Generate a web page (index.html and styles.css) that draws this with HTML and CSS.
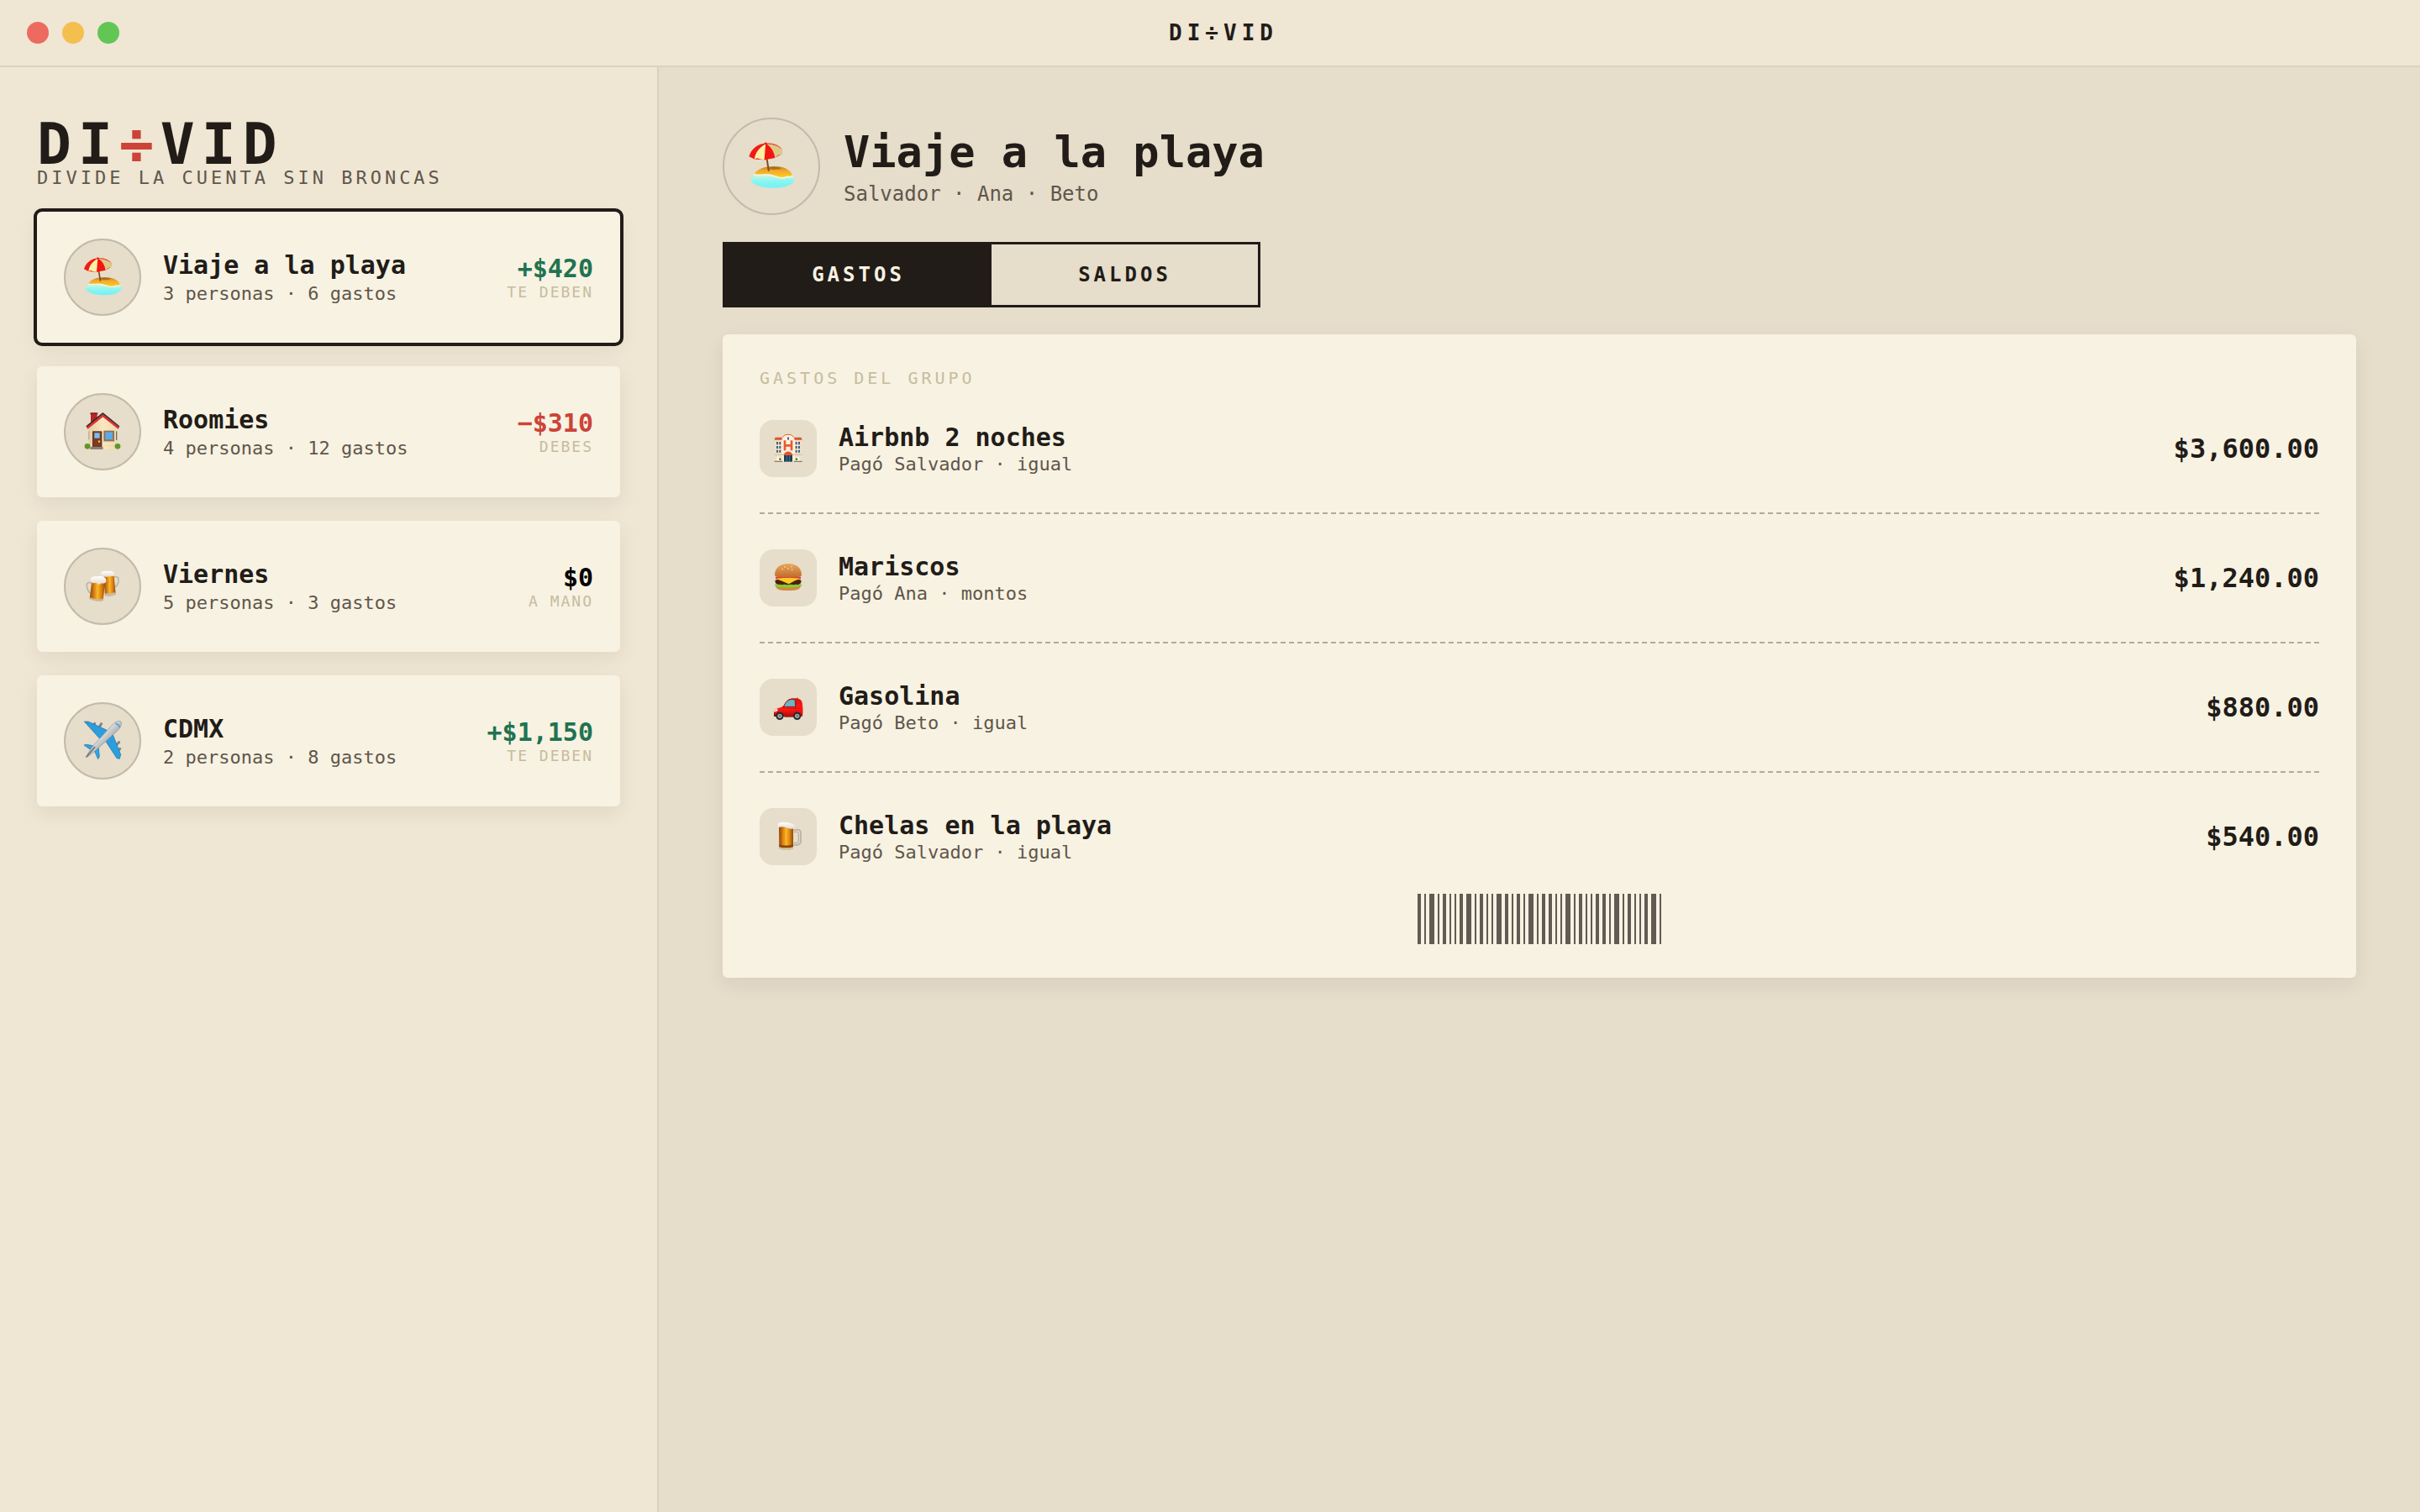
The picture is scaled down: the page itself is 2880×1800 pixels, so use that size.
FILE: index.html
```html
<!DOCTYPE html>
<html lang="es">
<head>
    <meta charset="UTF-8">
    <meta name="viewport" content="width=device-width, initial-scale=1.0">
    <title>DI÷VID</title>
    <link rel="stylesheet" href="styles.css">
</head>
<body>

    <!-- Icon drawings, reused below -->
    <svg class="sprite" aria-hidden="true">
        <defs>
            <linearGradient id="sand" x1="0" y1="0" x2="0" y2="1">
                <stop offset="0" stop-color="#b98222"/>
                <stop offset="0.35" stop-color="#f2a62e"/>
                <stop offset="1" stop-color="#ffcf1f"/>
            </linearGradient>
            <linearGradient id="sea" x1="0" y1="0" x2="0" y2="1">
                <stop offset="0" stop-color="#d9f5dc"/>
                <stop offset="0.5" stop-color="#8ff5ee"/>
                <stop offset="1" stop-color="#6cf3f8"/>
            </linearGradient>
            <linearGradient id="beer" x1="0" y1="0" x2="1" y2="0">
                <stop offset="0" stop-color="#8f4706"/>
                <stop offset="0.25" stop-color="#cf7610"/>
                <stop offset="0.5" stop-color="#fbb828"/>
                <stop offset="0.75" stop-color="#d98212"/>
                <stop offset="1" stop-color="#94490a"/>
            </linearGradient>
            <linearGradient id="foam" x1="0" y1="0" x2="0" y2="1">
                <stop offset="0" stop-color="#ffffff"/>
                <stop offset="1" stop-color="#e6d9cc"/>
            </linearGradient>
            <linearGradient id="bun" x1="0" y1="0" x2="0" y2="1">
                <stop offset="0" stop-color="#e9a75c"/>
                <stop offset="1" stop-color="#bf6d2c"/>
            </linearGradient>
            <linearGradient id="hull" x1="0" y1="0" x2="1" y2="1">
                <stop offset="0.3" stop-color="#ffffff"/>
                <stop offset="0.7" stop-color="#8d9095"/>
            </linearGradient>
            <linearGradient id="wall" x1="0" y1="0" x2="1" y2="0">
                <stop offset="0" stop-color="#e6cfa4"/>
                <stop offset="0.5" stop-color="#fbe6bf"/>
                <stop offset="1" stop-color="#f0dab0"/>
            </linearGradient>
            <linearGradient id="paint" x1="0" y1="0" x2="0" y2="1">
                <stop offset="0" stop-color="#e01010"/>
                <stop offset="0.6" stop-color="#ff1a14"/>
                <stop offset="1" stop-color="#b80808"/>
            </linearGradient>
        </defs>

        <symbol id="beach" viewBox="0 0 144 144">
            <path d="M12 112c0-14 26-20 64-18s64 4 64 18-26 24-62 24-66-10-66-24z" fill="url(#sea)"/>
            <path d="M22 96c4-14 28-24 58-24s52 12 54 28c-4 6-14 0-22 4-12 5-24-2-36-6s-34 2-54-2z" fill="url(#sand)"/>
            <path d="M22 97c18 3 36-3 52 2s26 11 38 6c8-4 16 1 23-4" fill="none" stroke="#e9f7dc" stroke-width="5" stroke-linecap="round"/>
            <ellipse cx="80" cy="78" rx="20" ry="4" fill="#8a5c14" opacity="0.6"/>
            <path d="M58 46l6 38" stroke="#8a4a20" stroke-width="5" stroke-linecap="round"/>
            <path d="M6 43C12 22 30 6 56 4c24-1 42 8 48 20l-2 12-22 12-28 5-30-2z" fill="#ef1c14"/>
            <path d="M55 6C36 16 24 32 22 51l8-3 10 3 11 2c5-18 7-32 4-47z" fill="#fdf0a6"/>
            <path d="M58 6c14 9 22 24 24 41l10-8 11-3 2-11C94 10 76 6 58 6z" fill="#dccb86"/>
            <path d="M55 7c-2 16-2 32-4 46l15-6 16 0C80 30 72 16 55 7z" fill="#f51510"/>
            <path d="M58 5c16-3 34 4 42 13-12-7-26-12-42-13z" fill="#f04a38"/>
            <circle cx="55" cy="4" r="3" fill="#d91a12"/>
        </symbol>

        <symbol id="house" viewBox="0 0 144 144">
            <rect x="30" y="5" width="23" height="34" rx="2" fill="#b3262a"/>
            <rect x="28" y="4" width="27" height="6" rx="2" fill="#8e1e22"/>
            <path d="M23 60L73 17l50 43v74H23z" fill="url(#wall)"/>
            <path d="M26 76h94M26 92h94M26 108h94M26 122h94" stroke="#e4cc9e" stroke-width="1.5"/>
            <path d="M15 54L73 7l58 47" fill="none" stroke="#2c2a2c" stroke-width="6" stroke-linejoin="round"/>
            <path d="M17 59L73 14l57 45" fill="none" stroke="#d8332f" stroke-width="8"/>
            <rect x="36" y="70" width="34" height="62" fill="#5e2e1e"/>
            <rect x="39" y="73" width="28" height="56" fill="#7a3c22"/>
            <rect x="43" y="76" width="19" height="19" fill="#79bdf2"/>
            <circle cx="60" cy="107" r="4" fill="#f2b53a"/>
            <rect x="76" y="68" width="38" height="38" fill="#8d7358"/>
            <rect x="82" y="73" width="26" height="27" fill="#5ea9e4"/>
            <rect x="22" y="70" width="3" height="30" fill="#b9a079"/>
            <rect x="120" y="70" width="4" height="32" fill="#7d6a58"/>
            <circle cx="18" cy="124" r="10" fill="#5f962d"/>
            <circle cx="126" cy="124" r="10" fill="#5f962d"/>
            <rect x="28" y="126" width="46" height="9" rx="2" fill="#8f8076"/>
        </symbol>

        <symbol id="cheers" viewBox="0 0 144 144">
            <path d="M113 40c14-5 18 2 16 14s-6 20-16 20" fill="none" stroke="#b9b5ac" stroke-width="5"/>
            <path d="M76 30l37 4 6 66c-10 6-26 8-38 4z" fill="url(#beer)"/>
            <path d="M80 98l39-4 1 7c-10 6-28 8-39 5z" fill="#c9b9a0"/>
            <path d="M65 28c2-12 15-12 25-10 12-2 24 2 24 10 2 10-6 8-14 8-12 4-33 4-35-8z" fill="url(#foam)"/>
            <path d="M34 60c-12-5-20 0-18 12s4 20 14 24" fill="none" stroke="#b9b5ac" stroke-width="5"/>
            <path d="M34 50l48 6-8 66c-14 4-34 2-48-6z" fill="url(#beer)"/>
            <path d="M27 112c14 6 34 8 48 4l-2 8c-14 4-34 0-47-7z" fill="#c9b9a0"/>
            <path d="M29 50c-2-12 12-14 23-13 14-5 33 2 33 13 2 10-8 13-17 11-10 10-14-2-22-2-8 4-17-1-17-9z" fill="url(#foam)"/>
        </symbol>

        <symbol id="plane" viewBox="0 0 144 144">
            <g stroke="#7e858c" stroke-width="9" stroke-linecap="round">
                <path d="M38 19l6-9M62 20l6-9"/>
                <path d="M124 84l7-7M127 107l7-7"/>
            </g>
            <path d="M7 3l14 0 67 31-25 31z" fill="#2b9ede" stroke="#1d6c9e" stroke-width="2"/>
            <path d="M137 121l-4 15-10-2-39-60 25-24z" fill="#2b9ede" stroke="#1d6c9e" stroke-width="2"/>
            <path d="M6 87l10-2 34 7-13 17z" fill="#2ba6e6" stroke="#1d6c9e" stroke-width="2"/>
            <path d="M56 137l5-9-3-32-15 11z" fill="#2ba6e6" stroke="#1d6c9e" stroke-width="2"/>
            <path d="M12 132c8-16 14-26 26-42l68-74c12-13 24-18 32-13 4 8-1 22-14 34L58 97c-16 14-28 25-46 35z" fill="url(#hull)" stroke="#8d9197" stroke-width="2"/>
            <path d="M118 10c8 1 13 6 16 14" fill="none" stroke="#4aa9d4" stroke-width="5"/>
            <path d="M15 129l30-36" stroke="#6d7278" stroke-width="5"/>
        </symbol>

        <symbol id="hotel" viewBox="0 0 108 108">
            <path d="M8 20h92v80H8z" fill="#efe0c8"/>
            <path d="M30 100V16C34 0 74 0 78 16v84z" fill="#fdf1dc"/>
            <path d="M34 15C38 0 70 0 74 15" fill="none" stroke="#e0592f" stroke-width="3"/>
            <path d="M8 14h24v9H5zM76 14h24l4 9H76z" fill="#d9522c"/>
            <g fill="#3f5f7d">
                <path d="M12 30h6v10h-6zM22 30h6v10h-6zM80 30h6v10h-6zM90 30h6v10h-6z"/>
                <path d="M12 45h6v9h-6zM22 45h6v9h-6zM80 45h6v9h-6zM90 45h6v9h-6z"/>
                <path d="M12 59h6v9h-6zM22 59h6v9h-6zM80 59h6v9h-6zM90 59h6v9h-6z"/>
                <rect x="51" y="13" width="6" height="10" rx="3"/>
            </g>
            <path d="M42 25v36M66 25v36M42 43h24" stroke="#ea5a30" stroke-width="8"/>
            <rect x="5" y="74" width="98" height="4" fill="#d9c6a8"/>
            <rect x="39" y="77" width="30" height="24" fill="#1f3f57"/>
            <path d="M49 77v24M59 77v24" stroke="#6c8fa5" stroke-width="2"/>
            <path d="M38 78c2-18 30-18 32 0z" fill="#e4552f"/>
            <path d="M14 100V88c0-6 12-6 12 0v12zM82 100V88c0-6 12-6 12 0v12z" fill="#fff6e6"/>
            <circle cx="25" cy="92" r="4" fill="#3f8434"/>
            <circle cx="84" cy="92" r="4" fill="#3f8434"/>
            <path d="M5 98h29v4H5zM74 98h30v4H74z" fill="#8d7a66"/>
        </symbol>

        <symbol id="burger" viewBox="0 0 108 108">
            <path d="M10 80c16 5 70 5 88 0 2 12-8 19-44 19S8 92 10 80z" fill="#d18942"/>
            <path d="M8 62c14-6 78-6 92 0 3 10-6 17-18 18H26C14 79 5 72 8 62z" fill="#4a2113"/>
            <path d="M6 78c5-5 10 1 18-1 8 4 14-2 22 1 8 3 14-2 22 0 8 2 12-3 20 0 6 1 8-3 14-1 2 8-6 5-12 9-8-2-12 4-20 1-8 4-16 0-24 2-8-3-14 1-20-3-10 2-20 0-20-8z" fill="#84cc30"/>
            <path d="M9 50c20-5 70-5 90 0v8c-20 4-70 4-90 0z" fill="#e23d2a"/>
            <path d="M10 57c20-4 68-4 88 0L80 63 56 76 32 65z" fill="#ffc928"/>
            <path d="M6 44C6 18 26 3 54 3s48 15 48 41c0 6-20 8-48 8S6 50 6 44z" fill="url(#bun)"/>
            <g fill="#f7d9a0">
                <ellipse cx="42" cy="15" rx="3" ry="2"/>
                <ellipse cx="54" cy="21" rx="3" ry="2"/>
                <ellipse cx="66" cy="14" rx="3" ry="2"/>
                <ellipse cx="68" cy="25" rx="2" ry="3"/>
                <ellipse cx="33" cy="23" rx="3" ry="2"/>
            </g>
        </symbol>

        <symbol id="car" viewBox="0 0 108 108">
            <path d="M88 28l-1-9" stroke="#555" stroke-width="3"/>
            <path d="M4 86c-3-12 0-22 12-28l20-6c8-16 16-28 32-30 20-2 34 2 36 16 3 16 3 30 1 48z" fill="url(#paint)"/>
            <path d="M38 52c6-16 14-24 26-26l14 0 2 26z" fill="#6bb6c4"/>
            <path d="M38 52c6-16 14-24 26-26l14 0 2 26z" fill="none" stroke="#5a1512" stroke-width="2"/>
            <path d="M82 27v54M50 58h52" stroke="#c20d0b" stroke-width="2"/>
            <path d="M32 50h10v8H34z" fill="#d31210"/>
            <path d="M5 68l8-9 5 5-9 7z" fill="#fff2e6"/>
            <path d="M3 80h8v7H4z" fill="#4a1a18"/>
            <path d="M40 87h34" stroke="#7d0b0a" stroke-width="4"/>
            <circle cx="24" cy="85" r="14" fill="#282828"/>
            <circle cx="24" cy="85" r="8" fill="#a9abad"/>
            <circle cx="24" cy="85" r="3" fill="#4e4f52"/>
            <circle cx="86" cy="85" r="14" fill="#282828"/>
            <circle cx="86" cy="85" r="8" fill="#a9abad"/>
            <circle cx="86" cy="85" r="3" fill="#4e4f52"/>
        </symbol>

        <symbol id="mug" viewBox="0 0 108 108">
            <path d="M73 31c20-5 26 0 26 12v26c0 12-9 16-26 15" fill="none" stroke="#bdb6aa" stroke-width="6"/>
            <path d="M74 38c12-3 17 0 17 8v20c0 8-5 11-17 11" fill="none" stroke="#8f897e" stroke-width="2"/>
            <path d="M21 18h51v78c-10 6-40 6-50 0z" fill="url(#beer)"/>
            <path d="M36 30v58M57 30v58" stroke="#f0a020" stroke-width="3" opacity="0.5"/>
            <path d="M22 82c12 5 39 5 50 0v8c-12 5-39 5-50 0z" fill="#8a450a"/>
            <path d="M21 91c12 5 40 5 51 0v6c-10 6-40 6-50 0z" fill="#cfc3ac"/>
            <path d="M17 18C13 7 28 1 42 3c16-1 36 7 36 14 0 10-8 10-14 9-10 2-18-7-28-7-8 0-15 4-19-1z" fill="url(#foam)"/>
        </symbol>
    </svg>

    <header class="titlebar">
        <div class="dots">
            <span class="dot red"></span>
            <span class="dot yellow"></span>
            <span class="dot green"></span>
        </div>
        <div class="window-title">DI÷VID</div>
    </header>

    <div class="app">
        <aside class="sidebar">
            <div class="logo">DI<span>÷</span>VID</div>
            <div class="tagline">DIVIDE LA CUENTA SIN BRONCAS</div>

            <div class="groups">
                <div class="group active">
                    <div class="avatar"><svg><use href="#beach"/></svg></div>
                    <div class="info">
                        <div class="name">Viaje a la playa</div>
                        <div class="meta">3 personas · 6 gastos</div>
                    </div>
                    <div class="balance">
                        <div class="amount pos">+$420</div>
                        <div class="status">TE DEBEN</div>
                    </div>
                </div>

                <div class="group">
                    <div class="avatar"><svg><use href="#house"/></svg></div>
                    <div class="info">
                        <div class="name">Roomies</div>
                        <div class="meta">4 personas · 12 gastos</div>
                    </div>
                    <div class="balance">
                        <div class="amount neg">−$310</div>
                        <div class="status">DEBES</div>
                    </div>
                </div>

                <div class="group">
                    <div class="avatar"><svg><use href="#cheers"/></svg></div>
                    <div class="info">
                        <div class="name">Viernes</div>
                        <div class="meta">5 personas · 3 gastos</div>
                    </div>
                    <div class="balance">
                        <div class="amount">$0</div>
                        <div class="status">A MANO</div>
                    </div>
                </div>

                <div class="group">
                    <div class="avatar"><svg><use href="#plane"/></svg></div>
                    <div class="info">
                        <div class="name">CDMX</div>
                        <div class="meta">2 personas · 8 gastos</div>
                    </div>
                    <div class="balance">
                        <div class="amount pos">+$1,150</div>
                        <div class="status">TE DEBEN</div>
                    </div>
                </div>
            </div>
        </aside>

        <main class="main">
            <div class="group-header">
                <div class="avatar big"><svg><use href="#beach"/></svg></div>
                <div>
                    <h1>Viaje a la playa</h1>
                    <p class="members">Salvador · Ana · Beto</p>
                </div>
            </div>

            <div class="tabs">
                <button class="tab selected">GASTOS</button>
                <button class="tab">SALDOS</button>
            </div>

            <section class="ticket">
                <div class="ticket-title">GASTOS DEL GRUPO</div>

                <div class="expense">
                    <div class="expense-icon"><svg><use href="#hotel"/></svg></div>
                    <div class="info">
                        <div class="name">Airbnb 2 noches</div>
                        <div class="meta">Pagó Salvador · igual</div>
                    </div>
                    <div class="price">$3,600.00</div>
                </div>
                <div class="divider"></div>

                <div class="expense">
                    <div class="expense-icon"><svg><use href="#burger"/></svg></div>
                    <div class="info">
                        <div class="name">Mariscos</div>
                        <div class="meta">Pagó Ana · montos</div>
                    </div>
                    <div class="price">$1,240.00</div>
                </div>
                <div class="divider"></div>

                <div class="expense">
                    <div class="expense-icon"><svg><use href="#car"/></svg></div>
                    <div class="info">
                        <div class="name">Gasolina</div>
                        <div class="meta">Pagó Beto · igual</div>
                    </div>
                    <div class="price">$880.00</div>
                </div>
                <div class="divider"></div>

                <div class="expense">
                    <div class="expense-icon"><svg><use href="#mug"/></svg></div>
                    <div class="info">
                        <div class="name">Chelas en la playa</div>
                        <div class="meta">Pagó Salvador · igual</div>
                    </div>
                    <div class="price">$540.00</div>
                </div>

                <div class="barcode"></div>
            </section>
        </main>
    </div>

    <script>
        // Bar widths of the ticket barcode, in units of 2px
        const bars = '2131211231211321213122113121122131211231';
        const barcode = document.querySelector('.barcode');

        for (const width of bars) {
            const bar = document.createElement('span');
            bar.style.width = width * 2 + 'px';
            barcode.appendChild(bar);
        }
    </script>
</body>
</html>
```

FILE: styles.css
```css
/* General Reset */
* {
    margin: 0;
    padding: 0;
    box-sizing: border-box;
}

body {
    font-family: 'DejaVu Sans Mono', monospace;
    background-color: #e6ddca;
    color: #211c18;
    height: 100vh;
    display: flex;
    flex-direction: column;
    overflow: hidden;
}

svg {
    display: block;
}

.sprite {
    position: absolute;
    width: 0;
    height: 0;
}

/* Title bar */
.titlebar {
    display: flex;
    align-items: center;
    height: 80px;
    padding: 0 32px;
    background-color: #efe6d3;
    border-bottom: 2px solid #dbd2c0;
}

.dots {
    display: flex;
    gap: 16px;
}

.dot {
    width: 26px;
    height: 26px;
    border-radius: 50%;
}

.red { background-color: #ed6a5e; }
.yellow { background-color: #f5bf4f; }
.green { background-color: #62c655; }

.window-title {
    flex: 1;
    margin-right: 78px;
    text-align: center;
    font-size: 26px;
    font-weight: bold;
    letter-spacing: 6px;
}

.app {
    flex: 1;
    display: flex;
}

/* Sidebar */
.sidebar {
    width: 784px;
    padding: 60px 44px;
    background-color: #efe6d3;
    border-right: 2px solid #d8cfbd;
}

.logo {
    font-size: 68px;
    font-weight: bold;
    line-height: 64px;
    letter-spacing: 8px;
}

.logo span {
    color: #cc4338;
}

.tagline {
    margin-top: -5px;
    font-size: 22px;
    line-height: 26px;
    letter-spacing: 4px;
    color: #5f564c;
}

.groups {
    display: flex;
    flex-direction: column;
    gap: 28px;
    margin-top: 27px;
}

.group {
    display: flex;
    align-items: center;
    gap: 26px;
    height: 156px;
    padding: 0 32px;
    background-color: #f8f2e2;
    border-radius: 6px;
    box-shadow: 0 8px 24px rgba(33, 28, 24, 0.07);
}

.group.active {
    outline: 4px solid #211c18;
}

.avatar {
    display: flex;
    align-items: center;
    justify-content: center;
    width: 92px;
    height: 92px;
    background-color: #e6ddca;
    border: 2px solid #c3bbaa;
    border-radius: 50%;
}

.avatar svg {
    width: 48px;
    height: 48px;
}

.info {
    flex: 1;
}

.name {
    font-size: 30px;
    font-weight: bold;
    line-height: 35px;
}

.meta {
    margin-top: 4px;
    font-size: 22px;
    line-height: 26px;
    color: #5f564c;
}

.balance {
    text-align: right;
}

.amount {
    font-size: 30px;
    font-weight: bold;
    line-height: 35px;
    color: #000;
}

.amount.pos { color: #217350; }
.amount.neg { color: #cc4338; }

.status {
    font-size: 18px;
    line-height: 21px;
    letter-spacing: 2px;
    color: #c6bc9f;
}

/* Main panel */
.main {
    flex: 1;
    padding: 60px 76px;
}

.group-header {
    display: flex;
    align-items: center;
    gap: 28px;
}

.avatar.big {
    width: 116px;
    height: 116px;
}

.avatar.big svg {
    width: 58px;
    height: 58px;
}

h1 {
    font-size: 52px;
    line-height: 59px;
}

.members {
    margin-top: 6px;
    font-size: 24px;
    line-height: 28px;
    color: #5f564c;
}

.tabs {
    display: flex;
    width: 640px;
    height: 78px;
    margin: 32px 0;
    border: 3px solid #211c18;
}

.tab {
    flex: 1;
    border: none;
    background: none;
    font-family: inherit;
    font-size: 24px;
    font-weight: bold;
    letter-spacing: 4px;
    color: #211c18;
}

.tab.selected {
    background-color: #211c18;
    color: #f8f2e2;
}

/* Ticket with the expenses */
.ticket {
    padding: 40px 44px;
    background-color: #f8f2e2;
    border-radius: 6px;
    box-shadow: 0 8px 24px rgba(33, 28, 24, 0.07);
}

.ticket-title {
    margin-bottom: 38px;
    font-size: 20px;
    line-height: 24px;
    letter-spacing: 4px;
    color: #c6bc9f;
}

.expense {
    display: flex;
    align-items: center;
    gap: 26px;
    height: 68px;
}

.expense .meta {
    margin-top: 2px;
}

.expense-icon {
    display: flex;
    align-items: center;
    justify-content: center;
    width: 68px;
    height: 68px;
    background-color: #e6ddca;
    border-radius: 16px;
}

.expense-icon svg {
    width: 36px;
    height: 36px;
}

.price {
    font-size: 32px;
    font-weight: bold;
}

.divider {
    height: 2px;
    margin: 42px 0;
    background: repeating-linear-gradient(to right, #b0ab9f 0 6px, transparent 6px 10px);
}

.barcode {
    display: flex;
    justify-content: center;
    gap: 4px;
    height: 60px;
    margin-top: 34px;
}

.barcode span {
    background-color: #605c54;
}
```
